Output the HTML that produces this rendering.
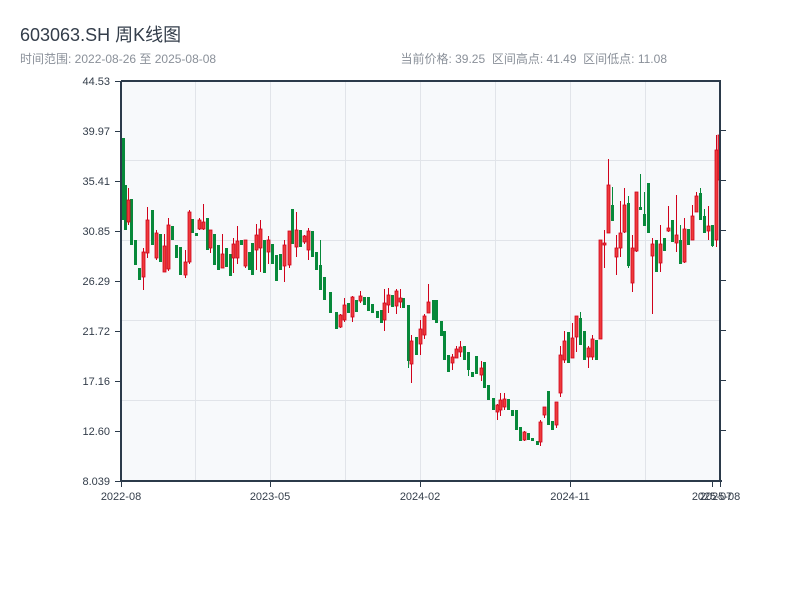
<!DOCTYPE html>
<html><head><meta charset="utf-8"><style>
html,body{margin:0;padding:0;background:#fff;width:800px;height:600px;overflow:hidden}
svg{display:block}
text{font-family:"Liberation Sans","Noto Sans CJK SC",sans-serif}
.g{fill:#07893a}
.r{fill:#ee3b3b;stroke:#d0021b;stroke-width:0.8}
</style></head><body>
<svg width="800" height="600" xmlns="http://www.w3.org/2000/svg">
<text x="20" y="41" font-size="18" fill="#333d4a">603063.SH 周K线图</text>
<text x="20" y="63" font-size="12" fill="#8a9099">时间范围: 2022-08-26 至 2025-08-08</text>
<text x="667" y="63" font-size="12" fill="#8a9099" text-anchor="end" xml:space="preserve">当前价格: 39.25  区间高点: 41.49  区间低点: 11.08</text>
<rect x="121" y="81" width="599" height="400" fill="#f7f9fb"/>
<g stroke="#e1e4e9" stroke-width="1">
<line x1="195.5" y1="81" x2="195.5" y2="481"/><line x1="270.5" y1="81" x2="270.5" y2="481"/>
<line x1="345.5" y1="81" x2="345.5" y2="481"/><line x1="420.5" y1="81" x2="420.5" y2="481"/>
<line x1="495.5" y1="81" x2="495.5" y2="481"/><line x1="570.5" y1="81" x2="570.5" y2="481"/>
<line x1="645.5" y1="81" x2="645.5" y2="481"/>
<line x1="121" y1="160.5" x2="720" y2="160.5"/><line x1="121" y1="240.5" x2="720" y2="240.5"/>
<line x1="121" y1="320.5" x2="720" y2="320.5"/><line x1="121" y1="400.5" x2="720" y2="400.5"/>
</g>
<!-- green wicks -->
<path fill="none" stroke="#07893a" stroke-width="1" d="M123.5 138V220M125.5 185V230M131.5 199V245M135.5 240V265M139.5 268V280M152.5 210V245M160.5 234V262M172.5 226V240M176.5 245V258M180.5 247V275M192.5 219V233M196.5 233V236M207.5 218V250M214.5 234V265M218.5 245V270M226.5 248V267M230.5 254V276M241.5 240V245M249.5 252V270M252.5 243V275M264.5 240V273M272.5 244V264M276.5 255V281M280.5 254V270M292.5 209V244M300.5 230V247M312.5 231V257M316.5 252V270M320.5 240V290M324.5 277V300M330.5 292V313M336.5 312V329M348.5 303V313M356.5 300V312M364.5 297V305M368.5 297V311M372.5 304V313M377.5 311V318M381.5 310V323M392.5 295V307M403.5 298V308M408.5 305V368M416.5 337V355M433.5 300V320M436.5 300V323M441.5 321V336M444.5 331V360M448.5 355V372M464.5 346V360M468.5 352V376M472.5 372V377M476.5 356V374M484.5 362V388M488.5 385V400M493.5 398V410M508.5 399V410M512.5 410V416M516.5 410V430M520.5 427V441M528.5 433V440M532.5 438V441M537.5 441V445M548.5 391V425M552.5 421V430M568.5 332V363M580.5 312V345M584.5 331V360M596.5 340V360M612.5 187V221M628.5 196V268M640.5 174V208M644.5 192V226M648.5 183V233M656.5 240V272M664.5 238V251M672.5 220V242M680.5 225V264M688.5 229V245M700.5 188V220M704.5 209V233M712.5 225V247"/>
<g class="g">
<rect x="122" y="138" width="3" height="82"/><rect x="124" y="185" width="3" height="45"/><rect x="130" y="199" width="3" height="46"/><rect x="134" y="240" width="3" height="25"/><rect x="138" y="268" width="3" height="12"/><rect x="151" y="210" width="3" height="35"/><rect x="159" y="234" width="3" height="28"/><rect x="171" y="226" width="3" height="14"/><rect x="175" y="245" width="3" height="13"/><rect x="179" y="247" width="3" height="28"/><rect x="191" y="219" width="3" height="14"/><rect x="195" y="233" width="3" height="3"/><rect x="206" y="218" width="3" height="32"/><rect x="213" y="234" width="3" height="31"/><rect x="217" y="245" width="3" height="25"/><rect x="225" y="248" width="3" height="19"/><rect x="229" y="254" width="3" height="22"/><rect x="240" y="240" width="3" height="5"/><rect x="248" y="252" width="3" height="18"/><rect x="251" y="243" width="3" height="32"/><rect x="263" y="240" width="3" height="33"/><rect x="271" y="244" width="3" height="20"/><rect x="275" y="255" width="3" height="26"/><rect x="279" y="254" width="3" height="16"/><rect x="291" y="209" width="3" height="35"/><rect x="299" y="230" width="3" height="17"/><rect x="311" y="231" width="3" height="26"/><rect x="315" y="252" width="3" height="18"/><rect x="319" y="265" width="3" height="25"/><rect x="323" y="277" width="3" height="23"/><rect x="329" y="292" width="3" height="21"/><rect x="335" y="312" width="3" height="17"/><rect x="347" y="303" width="3" height="10"/><rect x="355" y="300" width="3" height="12"/><rect x="363" y="297" width="3" height="8"/><rect x="367" y="297" width="3" height="14"/><rect x="371" y="304" width="3" height="9"/><rect x="376" y="311" width="3" height="7"/><rect x="380" y="310" width="3" height="13"/><rect x="391" y="295" width="3" height="12"/><rect x="402" y="298" width="3" height="10"/><rect x="407" y="305" width="3" height="56"/><rect x="415" y="337" width="3" height="18"/><rect x="432" y="300" width="3" height="20"/><rect x="435" y="300" width="3" height="23"/><rect x="440" y="321" width="3" height="15"/><rect x="443" y="331" width="3" height="29"/><rect x="447" y="355" width="3" height="17"/><rect x="463" y="346" width="3" height="14"/><rect x="467" y="352" width="3" height="18"/><rect x="471" y="372" width="3" height="5"/><rect x="475" y="356" width="3" height="18"/><rect x="483" y="362" width="3" height="26"/><rect x="487" y="385" width="3" height="15"/><rect x="492" y="398" width="3" height="12"/><rect x="507" y="399" width="3" height="11"/><rect x="511" y="410" width="3" height="6"/><rect x="515" y="410" width="3" height="20"/><rect x="519" y="427" width="3" height="14"/><rect x="527" y="433" width="3" height="7"/><rect x="531" y="438" width="3" height="3"/><rect x="536" y="441" width="3" height="4"/><rect x="547" y="391" width="3" height="34"/><rect x="551" y="421" width="3" height="9"/><rect x="567" y="332" width="3" height="31"/><rect x="579" y="318" width="3" height="27"/><rect x="583" y="331" width="3" height="29"/><rect x="595" y="340" width="3" height="20"/><rect x="611" y="205" width="3" height="16"/><rect x="627" y="203" width="3" height="63"/><rect x="639" y="207" width="3" height="3"/><rect x="643" y="214" width="3" height="12"/><rect x="647" y="183" width="3" height="50"/><rect x="655" y="240" width="3" height="32"/><rect x="663" y="238" width="3" height="13"/><rect x="671" y="220" width="3" height="22"/><rect x="679" y="240" width="3" height="24"/><rect x="687" y="229" width="3" height="16"/><rect x="699" y="193" width="3" height="27"/><rect x="703" y="216" width="3" height="17"/><rect x="711" y="225" width="3" height="21"/>
</g>
<!-- red wicks -->
<path fill="none" stroke="#d0021b" stroke-width="1" d="M128.5 188V225M143.5 248V290M147.5 207V258M156.5 230V260M164.5 234V272M168.5 218V271M185.5 250V278M189.5 210V264M199.5 218V230M203.5 204V230M210.5 233V253M222.5 234V268M233.5 238V273M237.5 226V264M245.5 240V268M256.5 224V270M260.5 220V272M268.5 236V264M284.5 240V282M289.5 231V268M296.5 212V257M304.5 235V244M308.5 228V260M340.5 314V328M344.5 298V322M352.5 296V322M360.5 291V303M384.5 289V331M388.5 288V313M396.5 289V314M400.5 289V308M411.5 335V383M420.5 320V355M424.5 314V339M428.5 284V313M452.5 354V370M456.5 346V358M460.5 341V357M481.5 361V381M497.5 404V420M500.5 393V416M504.5 393V410M524.5 431V441M540.5 420V446M544.5 407V418M556.5 402V428M560.5 346V397M564.5 331V363M572.5 323V358M576.5 316V352M588.5 346V368M592.5 335V360M600.5 240V339M604.5 230V268M608.5 159V233M616.5 235V275M620.5 201V257M624.5 188V233M632.5 235V292M636.5 192V252M652.5 238V314M660.5 225V272M668.5 206V232M676.5 195V252M684.5 218V263M692.5 205V240M696.5 192V212M708.5 206V240M716.5 135V247M719.5 118V190"/>
<g class="r">
<rect x="127" y="200" width="3" height="22"/><rect x="142" y="252" width="3" height="25"/><rect x="146" y="220" width="3" height="33"/><rect x="155" y="233" width="3" height="25"/><rect x="163" y="246" width="3" height="26"/><rect x="167" y="225" width="3" height="44"/><rect x="184" y="262" width="3" height="13"/><rect x="188" y="212" width="3" height="50"/><rect x="198" y="220" width="3" height="9"/><rect x="202" y="222" width="3" height="7"/><rect x="209" y="230" width="3" height="18"/><rect x="221" y="254" width="3" height="14"/><rect x="232" y="244" width="3" height="14"/><rect x="236" y="241" width="3" height="17"/><rect x="244" y="240" width="3" height="26"/><rect x="255" y="235" width="3" height="15"/><rect x="259" y="229" width="3" height="19"/><rect x="267" y="240" width="3" height="12"/><rect x="283" y="245" width="3" height="21"/><rect x="288" y="231" width="3" height="34"/><rect x="295" y="230" width="3" height="17"/><rect x="303" y="236" width="3" height="6"/><rect x="307" y="231" width="3" height="19"/><rect x="339" y="315" width="3" height="12"/><rect x="343" y="305" width="3" height="15"/><rect x="351" y="297" width="3" height="20"/><rect x="359" y="296" width="3" height="5"/><rect x="383" y="303" width="3" height="17"/><rect x="387" y="295" width="3" height="10"/><rect x="395" y="291" width="3" height="15"/><rect x="399" y="298" width="3" height="4"/><rect x="410" y="341" width="3" height="23"/><rect x="419" y="329" width="3" height="15"/><rect x="423" y="316" width="3" height="19"/><rect x="427" y="302" width="3" height="11"/><rect x="451" y="357" width="3" height="6"/><rect x="455" y="349" width="3" height="9"/><rect x="459" y="347" width="3" height="5"/><rect x="480" y="368" width="3" height="7"/><rect x="496" y="405" width="3" height="7"/><rect x="499" y="400" width="3" height="10"/><rect x="503" y="399" width="3" height="8"/><rect x="523" y="432" width="3" height="8"/><rect x="539" y="422" width="3" height="20"/><rect x="543" y="407" width="3" height="8"/><rect x="555" y="402" width="3" height="23"/><rect x="559" y="355" width="3" height="38"/><rect x="563" y="341" width="3" height="19"/><rect x="571" y="338" width="3" height="20"/><rect x="575" y="316" width="3" height="21"/><rect x="587" y="348" width="3" height="9"/><rect x="591" y="339" width="3" height="18"/><rect x="599" y="240" width="3" height="99"/><rect x="603" y="243" width="3" height="2"/><rect x="607" y="185" width="3" height="48"/><rect x="615" y="248" width="3" height="9"/><rect x="619" y="233" width="3" height="15"/><rect x="623" y="205" width="3" height="27"/><rect x="631" y="248" width="3" height="35"/><rect x="635" y="192" width="3" height="59"/><rect x="651" y="244" width="3" height="12"/><rect x="659" y="244" width="3" height="19"/><rect x="667" y="228" width="3" height="3"/><rect x="675" y="235" width="3" height="8"/><rect x="683" y="229" width="3" height="33"/><rect x="691" y="216" width="3" height="24"/><rect x="695" y="196" width="3" height="16"/><rect x="707" y="226" width="3" height="5"/><rect x="715" y="150" width="3" height="90"/><rect x="718" y="135" width="2" height="45"/>
</g>
<g stroke="#2b3a4a" stroke-width="2" fill="none">
<line x1="121" y1="81" x2="121" y2="482"/><line x1="120" y1="481" x2="722" y2="481"/>
<line x1="720" y1="80" x2="720" y2="482"/><line x1="121" y1="81" x2="720" y2="81"/>
</g>
<g stroke="#2b3a4a" stroke-width="1">
<line x1="115" y1="81.5" x2="121" y2="81.5"/><line x1="115" y1="131.5" x2="121" y2="131.5"/>
<line x1="115" y1="181.5" x2="121" y2="181.5"/><line x1="115" y1="231.5" x2="121" y2="231.5"/>
<line x1="115" y1="281.5" x2="121" y2="281.5"/><line x1="115" y1="331.5" x2="121" y2="331.5"/>
<line x1="115" y1="381.5" x2="121" y2="381.5"/><line x1="115" y1="431.5" x2="121" y2="431.5"/>
<line x1="115" y1="481.5" x2="121" y2="481.5"/>
<line x1="720" y1="130.5" x2="726" y2="130.5"/><line x1="720" y1="180.5" x2="726" y2="180.5"/>
<line x1="720" y1="230.5" x2="726" y2="230.5"/><line x1="720" y1="280.5" x2="726" y2="280.5"/>
<line x1="720" y1="330.5" x2="726" y2="330.5"/><line x1="720" y1="380.5" x2="726" y2="380.5"/>
<line x1="720" y1="430.5" x2="726" y2="430.5"/>
<line x1="121.5" y1="481" x2="121.5" y2="487"/><line x1="270.5" y1="481" x2="270.5" y2="487"/>
<line x1="420.5" y1="481" x2="420.5" y2="487"/><line x1="570.5" y1="481" x2="570.5" y2="487"/>
<line x1="712.5" y1="481" x2="712.5" y2="487"/><line x1="720.5" y1="481" x2="720.5" y2="487"/>
</g>
<g font-size="11" fill="#333d4a" text-anchor="end">
<text x="110" y="85">44.53</text><text x="110" y="135">39.97</text><text x="110" y="185">35.41</text>
<text x="110" y="235">30.85</text><text x="110" y="285">26.29</text><text x="110" y="335">21.72</text>
<text x="110" y="385">17.16</text><text x="110" y="435">12.60</text><text x="110" y="485">8.039</text>
</g>
<g font-size="11" fill="#333d4a" text-anchor="middle">
<text x="121" y="500">2022-08</text><text x="270" y="500">2023-05</text>
<text x="420" y="500">2024-02</text><text x="570" y="500">2024-11</text>
<text x="712" y="500">2025-07</text><text x="720" y="500">2025-08</text>
</g>
</svg>
</body></html>
